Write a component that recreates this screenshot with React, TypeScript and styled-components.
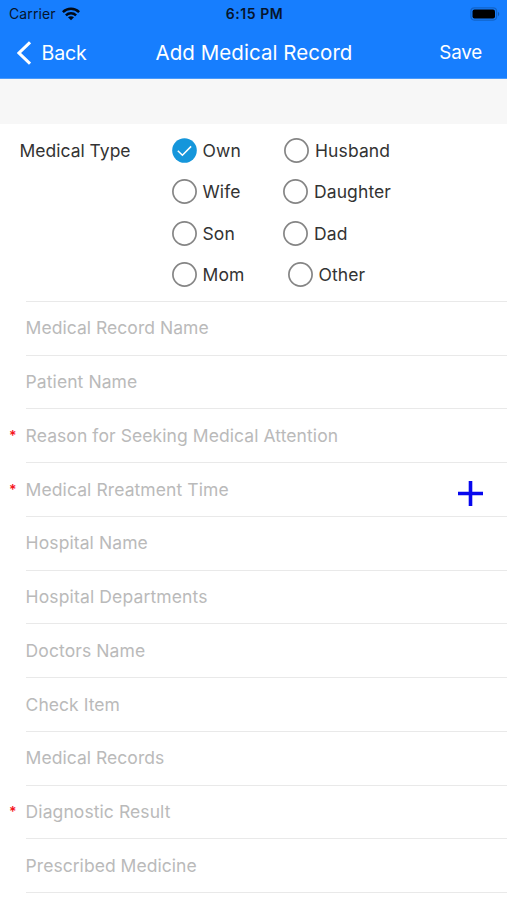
import React, { useState } from "react";
import styled, { createGlobalStyle } from "styled-components";

const Global = createGlobalStyle`
  * { box-sizing: border-box; }
  body { margin: 0; background: #fff; overflow: hidden; }
`;

const Screen = styled.main`
  width: 507px;
  height: 900px;
  overflow: hidden;
  background: #fff;
  font-family: Inter, "Liberation Sans", sans-serif;
  color: #333;
`;

const Header = styled.header`
  height: 79px;
  background: #177efe;
  border-bottom: 1px solid #4a9afb;
`;

const StatusBar = styled.div`
  height: 27px;
  display: grid;
  grid-template-columns: 1fr auto 1fr;
  align-items: center;
  padding: 0 7px 0 9px;
  color: #06152c;
`;

const Carrier = styled.div`
  display: flex;
  align-items: center;
  gap: 6px;
  font-size: 14px;
  letter-spacing: 0.1px;
`;

const Clock = styled.div`
  font-size: 14px;
  font-weight: 600;
  letter-spacing: 0.55px;
`;

const Battery = styled.svg`
  justify-self: end;
`;

const NavBar = styled.nav`
  height: 51px;
  display: grid;
  grid-template-columns: 1fr auto 1fr;
  align-items: center;
  padding: 0 25px 0 17px;
  color: #fff;
`;

const NavButton = styled.button<{ $end?: boolean }>`
  justify-self: ${(p) => (p.$end ? "end" : "start")};
  display: flex;
  align-items: center;
  gap: 10.6px;
  padding: 0;
  border: 0;
  background: none;
  color: inherit;
  font: inherit;
  font-size: ${(p) => (p.$end ? "18.8px" : "19.6px")};
  letter-spacing: -0.2px;
`;

const Title = styled.h1`
  margin: 0 0 1px;
  padding-left: 9px;
  font-size: 20.5px;
  font-weight: 400;
  letter-spacing: 0.05px;
`;

const Spacer = styled.div`
  height: 45px;
  background: #f7f7f7;
`;

const TypeSection = styled.section`
  height: 177px;
  display: grid;
  grid-template-columns: 152px 1fr;
  padding: 5.4px 0 0 19.5px;
`;

const TypeLabel = styled.div`
  line-height: 43px;
  font-size: 17.5px;
`;

const Options = styled.div`
  display: grid;
  grid-template-columns: 111px 1fr;
  grid-auto-rows: 41.5px;
`;

const Option = styled.button<{ $inset: number }>`
  display: flex;
  align-items: center;
  gap: 6px;
  padding: 0 0 0 ${(p) => p.$inset}px;
  border: 0;
  background: none;
  color: #333;
  font: inherit;
  font-size: 17.5px;
  letter-spacing: 0.1px;
  white-space: nowrap;
`;

const Form = styled.section`
  display: flex;
  flex-direction: column;
`;

const Row = styled.label`
  height: 53.74px;
  flex: none;
  display: grid;
  grid-template-columns: 25px 1fr auto;
  align-items: stretch;
`;

const Star = styled.span`
  align-self: center;
  padding-left: 9px;
  font-size: 14px;
  font-weight: 600;
  line-height: 15px;
  color: #f5141c;
`;

const Field = styled.span<{ $spacing: number }>`
  grid-column: 2 / 4;
  grid-row: 1;
  display: flex;
  align-items: center;
  justify-content: space-between;
  margin-left: 0.6px;
  padding: 0 24.5px 1px 0;
  border-top: 1px solid #e9e9e9;
  color: #bababa;
  font-size: 17.5px;
  letter-spacing: ${(p) => p.$spacing}px;
`;

const PlusIcon = styled.svg`
  margin-top: 8px;
`;

const types: [string, number][] = [
  ["Own", 0], ["Husband", 1.5], ["Wife", 0], ["Daughter", 0.5],
  ["Son", 0], ["Dad", 0.5], ["Mom", 0], ["Other", 5],
];

interface FieldSpec { name: string; required?: boolean; add?: boolean; spacing?: number }

const fields: FieldSpec[] = [
  { name: "Medical Record Name", spacing: 0.04 },
  { name: "Patient Name", spacing: 0.08 },
  { name: "Reason for Seeking Medical Attention", required: true, spacing: 0.08 },
  { name: "Medical Rreatment Time", required: true, add: true, spacing: 0.09 },
  { name: "Hospital Name", spacing: 0.1 },
  { name: "Hospital Departments", spacing: 0.14 },
  { name: "Doctors Name", spacing: 0.1 },
  { name: "Check Item", spacing: 0.04 },
  { name: "Medical Records", spacing: 0.04 },
  { name: "Diagnostic Result", required: true, spacing: 0.09 },
  { name: "Prescribed Medicine", spacing: 0.04 },
  { name: "" },
];

const Wifi = () => (
  <svg width="18" height="14" viewBox="0 0 18 14" fill="none" stroke="#020a16" strokeWidth="2.5">
    <path d="M.9 5.1C5.3.7 12.7.7 17.1 5.1" />
    <path d="M3.9 8.3c2.9-2.8 7.3-2.8 10.2 0" />
    <path d="M9 13.3 6 10.3c1.7-1.5 4.3-1.5 6 0z" fill="#020a16" stroke="none" />
  </svg>
);

const Radio = ({ checked }: { checked: boolean }) => (
  <svg width="25" height="25" viewBox="0 0 25 25" fill="none">
    {checked ? (
      <>
        <circle cx="12.5" cy="12.5" r="12.3" fill="#1596db" />
        <path d="m5.8 12.7 4.6 4.5 8.7-8.8" stroke="#fff" strokeWidth="1.5" />
      </>
    ) : (
      <circle cx="12.5" cy="12.5" r="11.6" stroke="#858585" strokeWidth="1.7" />
    )}
  </svg>
);

export default function App() {
  const [selected, setSelected] = useState("Own");
  return (
    <Screen>
      <Global />
      <Header>
        <StatusBar>
          <Carrier>Carrier <Wifi /></Carrier>
          <Clock>6:15 PM</Clock>
          <Battery width="30" height="14" viewBox="0 0 30 14">
            <rect x=".9" y=".9" width="25.7" height="12.2" rx="3.5" fill="none" stroke="#1264c9" strokeWidth="1.2" />
            <rect x="2.5" y="2.5" width="22.5" height="9" rx="2" fill="#000" />
            <path d="M28 4.8c1.7.7 1.7 3.7 0 4.4z" fill="#1059b2" />
          </Battery>
        </StatusBar>
        <NavBar>
          <NavButton>
            <svg width="14" height="24" viewBox="0 0 14 24" fill="none" stroke="#fff" strokeWidth="3">
              <path d="M13 1.3 2 12l11 10.7" />
            </svg>
            Back
          </NavButton>
          <Title>Add Medical Record</Title>
          <NavButton $end>Save</NavButton>
        </NavBar>
      </Header>
      <Spacer />
      <TypeSection>
        <TypeLabel>Medical Type</TypeLabel>
        <Options>
          {types.map(([name, inset]) => (
            <Option key={name} $inset={inset} onClick={() => setSelected(name)}>
              <Radio checked={selected === name} />
              {name}
            </Option>
          ))}
        </Options>
      </TypeSection>
      <Form>
        {fields.map((f) => (
          <Row key={f.name}>
            {f.required && <Star>*</Star>}
            <Field $spacing={f.spacing ?? 0}>
              {f.name}
              {f.add && (
                <PlusIcon width="25" height="25" viewBox="0 0 25 25" stroke="#0707ee" strokeWidth="3.6">
                  <path d="M12.5 0v25M0 12.5h25" />
                </PlusIcon>
              )}
            </Field>
          </Row>
        ))}
      </Form>
    </Screen>
  );
}
